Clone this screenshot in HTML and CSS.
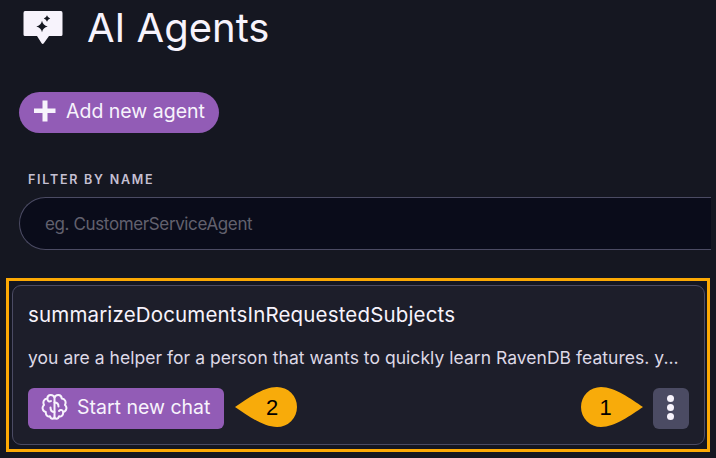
FILE: index.html
```
<!DOCTYPE html>
<html lang="en">
<head>
<meta charset="utf-8">
<title>AI Agents</title>
<link rel="stylesheet" href="styles.css">
</head>
<body>
<main class="page">
  <header class="page-header">
    <svg class="agents-icon" viewBox="0 0 40 33" aria-hidden="true">
      <path fill="#f7f3fc" d="M2 0H38Q39.5 0 39.5 2V23.500Q39.500 25 38 25H26L20.800 32.300Q19.700 33.500 18.600 32.300L14 25H2Q.5 25 .5 23.500V2Q.5 0 2 0Z"/>
      <path fill="#151721" d="M19 9.800Q20 14.500 24.700 15.500Q20 16.500 19 21.200Q18 16.500 13.300 15.500Q18 14.500 19 9.800ZM24 4.300Q24.700 6.800 27.200 7.500Q24.700 8.200 24 10.700Q23.300 8.200 20.800 7.500Q23.300 6.800 24 4.300Z"/>
    </svg>
    <h1 class="title">AI Agents</h1>
  </header>

  <button class="btn btn-add" type="button">
    <svg class="plus-icon" viewBox="0 0 22 22" aria-hidden="true"><path fill="#f7f3fc" d="M8.500 0.500H13.500V8.500H21.500V13H13.500V21.500H8.500V13H0V8.500H8.500Z"/></svg>
    <span class="add-text">Add new agent</span>
  </button>

  <label class="filter-label" for="filter">FILTER BY NAME</label>
  <input class="filter-input" id="filter" type="text" placeholder="eg. CustomerServiceAgent">

  <div class="highlight">
    <article class="card">
      <h2 class="card-title">summarizeDocumentsInRequestedSubjects</h2>
      <p class="card-text">you are a helper for a person that wants to quickly learn RavenDB features. y...</p>
      <div class="card-actions">
        <button class="btn btn-chat" type="button">
          <svg class="brain-icon" viewBox="0 0 26 26" fill="none" stroke="#f7f3fc" stroke-width="2" stroke-linecap="round" stroke-linejoin="round" aria-hidden="true">
            <path d="M13 4C12 0 6 0 5.800 4.500C2.500 4.500 1 8 2.500 11C0 13 1 17.500 4.300 18C4 21.500 6.500 23 8.500 22.300C9.500 26 13 25.500 13 22V4C14 0 20 0 20.200 4.500C23.500 4.500 25 8 23.500 11C26 13 25 17.500 21.700 18C22 21.500 19.500 23 17.500 22.300C16.500 26 13 25.500 13 22"/>
            <path d="M5.800 4.500C6 7.500 8 8 9.500 7M13 18C10 18 9 16.500 9 13.500M13 8.500C16 8.500 17 10 17 12.500M21.700 18C21 15.500 18.500 15.800 17.500 17"/>
          </svg>
          <span class="chat-text">Start new chat</span>
        </button>
        <svg class="marker marker-two" viewBox="0 0 62 40" role="img" aria-label="2">
          <path fill="#f8ab0a" d="M0 20C12 12 28 0 42 0A20 20 0 0 1 42 40C28 40 12 28 0 20Z"/>
          <text class="marker-text" x="37" y="28" text-anchor="middle">2</text>
        </svg>
        <svg class="marker marker-one" viewBox="0 0 62 40" role="img" aria-label="1">
          <path fill="#f8ab0a" d="M62 20C50 12 34 0 20 0A20 20 0 0 0 20 40C34 40 50 28 62 20Z"/>
          <text class="marker-text" x="24.500" y="28" text-anchor="middle">1</text>
        </svg>
        <button class="btn btn-more" type="button" aria-label="More">
          <span class="dot"></span><span class="dot"></span><span class="dot"></span>
        </button>
      </div>
    </article>
  </div>
</main>
</body>
</html>
```
FILE: styles.css
```
* { box-sizing: border-box; }

body {
  margin: 0;
  background: #151721;
  color: #f7f3fc;
  font-family: Inter, "Liberation Sans", sans-serif;
}

.page {
  display: flex;
  flex-direction: column;
  align-items: flex-start;
  width: 716px;
  height: 458px;
  overflow: hidden;
}

.page-header {
  display: flex;
  align-items: center;
  gap: 24px;
  height: 55px;
  padding-left: 23px;
}

.agents-icon { width: 40px; height: 33px; }

.title {
  margin: 0;
  font-size: 40px;
  font-weight: 400;
  line-height: 55px;
}

.btn {
  display: flex;
  align-items: center;
  flex: none;
  height: 41px;
  border: 0;
  padding: 0;
  background: #925cb6;
  color: #f7f3fc;
  font-family: inherit;
  font-size: 19.5px;
  white-space: nowrap;
}

.btn-add {
  width: 200px;
  margin: 37px 0 0 19px;
  padding: 0 0 3px 15px;
  gap: 10px;
  border-radius: 21px;
}

.plus-icon { width: 22px; height: 22px; }

.filter-label {
  margin: 39px 0 0 28px;
  color: #c5c0d3;
  font-size: 12.5px;
  font-weight: 600;
  line-height: 16px;
  letter-spacing: 1.75px;
}

.filter-input {
  width: 692px;
  height: 53px;
  margin: 9px 0 0 19px;
  padding: 0 0 0 25px;
  border: 1px solid #4b4b63;
  border-right: 0;
  border-radius: 27px 0 0 27px;
  outline: 0;
  background: #0a0c1a;
  color: #f7f3fc;
  font-family: inherit;
  font-size: 17px;
  letter-spacing: -0.37px;
}

.filter-input::placeholder { color: #62616e; opacity: 1; }

.highlight {
  width: 704px;
  height: 174px;
  margin: 28px 0 0 6px;
  padding: 4px 2px 4px 3px;
  border: 3px solid #fca904;
}

.card {
  height: 160px;
  padding: 14px 15px;
  border: 1px solid #4b4b63;
  border-radius: 9px;
  background: #1d1e2a;
}

.card-title {
  margin: 0;
  font-size: 20.5px;
  font-weight: 400;
  line-height: 30px;
  letter-spacing: 0.16px;
}

.card-text {
  margin: 16px 0 0;
  color: #ded9e6;
  font-size: 17.5px;
  line-height: 24px;
  letter-spacing: 0.035px;
  white-space: nowrap;
}

.card-actions {
  display: flex;
  align-items: center;
  height: 41px;
  margin-top: 18px;
}

.btn-chat {
  width: 196px;
  padding: 0 0 3px 13px;
  gap: 9px;
  border-radius: 6px;
}

.brain-icon { width: 27px; height: 26px; }

.marker { flex: none; width: 62px; height: 40px; margin-bottom: 3px; }
.marker-two { margin-left: 11px; }
.marker-one { margin-left: auto; }

.marker-text {
  fill: #000;
  font-family: "Liberation Sans", sans-serif;
  font-size: 22px;
}

.btn-more {
  flex-direction: column;
  justify-content: center;
  gap: 2px;
  width: 36px;
  margin-left: 10px;
  padding: 0 1px 3px 0;
  border-radius: 6px;
  background: #4b4b63;
}

.dot {
  width: 7px;
  height: 7px;
  border-radius: 50%;
  background: #f7f3fc;
}
```
